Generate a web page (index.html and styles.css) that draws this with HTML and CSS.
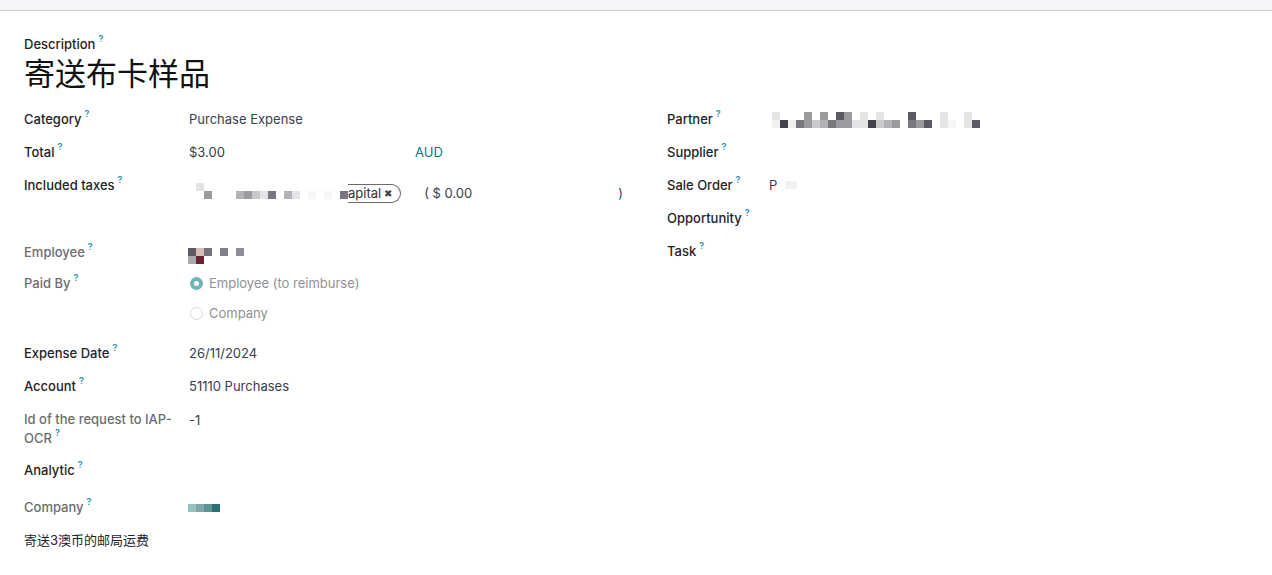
FILE: index.html
```html
<!DOCTYPE html>
<html lang="en">
<head>
<meta charset="utf-8">
<title>Expense</title>
<link rel="stylesheet" href="styles.css">
</head>
<body>
<div class="topbar"></div>
<main class="sheet">
  <div class="desc-label">Description<sup class="help">?</sup></div>
  <h1 class="title">寄送布卡样品</h1>

  <div class="groups">
    <section class="group group-left">
      <div class="row">
        <div class="label">Category<sup class="help">?</sup></div>
        <div class="value">Purchase Expense</div>
      </div>
      <div class="row">
        <div class="label">Total<sup class="help">?</sup></div>
        <div class="value total">
          <span class="amount">$3.00</span>
          <span class="currency">AUD</span>
        </div>
      </div>
      <div class="row row-taxes">
        <div class="label">Included taxes<sup class="help">?</sup></div>
        <div class="value taxes">
          <div class="pix pix-tax">
            <i class="p-l1"></i><i></i><i></i><i></i><i></i><i></i><i></i><i></i><i></i><i></i><i></i><i></i><i></i><i></i><i></i><i></i><i></i><i></i><i></i>
            <i></i><i class="p-m1"></i><i></i><i></i><i></i><i class="p-m3"></i><i class="p-m1"></i><i class="p-l0"></i><i class="p-l1"></i><i class="p-m2"></i><i></i><i class="p-m3"></i><i class="p-l1"></i><i></i><i class="p-l3"></i><i></i><i class="p-l3"></i><i></i><i class="p-m2"></i>
          </div>
          <span class="pill">apital <span class="pill-x">✖</span></span>
          <span class="tax-amount">( $ 0.00</span>
          <span>)</span>
        </div>
      </div>
      <div class="row row-employee">
        <div class="label muted">Employee<sup class="help">?</sup></div>
        <div class="value emp">
          <div class="pix pix-emp">
            <i class="e1"></i><i class="e2"></i><i class="e3"></i><i></i><i class="e4"></i><i></i><i class="e5"></i>
            <i class="e6"></i><i class="e7"></i><i></i><i></i><i></i><i></i><i></i>
          </div>
        </div>
      </div>
      <div class="row row-paid">
        <div class="label muted">Paid By<sup class="help">?</sup></div>
        <div class="value radios">
          <label class="radio"><span class="dot on"></span>Employee (to reimburse)</label>
          <label class="radio"><span class="dot"></span>Company</label>
        </div>
      </div>
      <div class="row">
        <div class="label">Expense Date<sup class="help">?</sup></div>
        <div class="value">26/11/2024</div>
      </div>
      <div class="row">
        <div class="label">Account<sup class="help">?</sup></div>
        <div class="value">51110 Purchases</div>
      </div>
      <div class="row row-iap">
        <div class="label muted">Id of the request to IAP-OCR<sup class="help">?</sup></div>
        <div class="value">-1</div>
      </div>
      <div class="row row-analytic">
        <div class="label">Analytic<sup class="help">?</sup></div>
        <div class="value"></div>
      </div>
      <div class="row">
        <div class="label muted">Company<sup class="help">?</sup></div>
        <div class="value comp">
          <div class="pix pix-comp"><i class="c1"></i><i class="c2"></i><i class="c3"></i><i class="c4"></i></div>
        </div>
      </div>
    </section>

    <section class="group group-right">
      <div class="row">
        <div class="label">Partner<sup class="help">?</sup></div>
        <div class="value partner">
          <div class="pix pix-partner">
            <i class="p-l1"></i><i></i><i></i><i></i><i class="p-m1"></i><i></i><i class="p-m1"></i><i></i><i class="p-d1"></i><i class="p-m1"></i><i></i><i class="p-l1"></i><i></i><i class="p-l1"></i><i></i><i></i><i></i><i class="p-d1"></i><i></i><i></i><i></i><i class="p-l1"></i><i></i><i></i><i class="p-l1"></i><i></i>
            <i class="p-l2"></i><i class="p-d2"></i><i class="p-l2"></i><i class="p-m2"></i><i class="p-m1"></i><i class="p-l0"></i><i class="p-m3"></i><i class="p-m2"></i><i class="p-m1"></i><i class="p-m1"></i><i class="p-l1"></i><i class="p-l1"></i><i class="p-d2"></i><i class="p-l0"></i><i class="p-m3"></i><i class="p-m1"></i><i></i><i class="p-m2"></i><i class="p-m1"></i><i class="p-d1"></i><i></i><i class="p-l1"></i><i class="p-l3"></i><i></i><i class="p-l1"></i><i class="p-d1"></i>
          </div>
        </div>
      </div>
      <div class="row">
        <div class="label">Supplier<sup class="help">?</sup></div>
        <div class="value"></div>
      </div>
      <div class="row">
        <div class="label">Sale Order<sup class="help">?</sup></div>
        <div class="value so">P<span class="so-blur"><i></i><i></i></span></div>
      </div>
      <div class="row">
        <div class="label">Opportunity<sup class="help">?</sup></div>
        <div class="value"></div>
      </div>
      <div class="row">
        <div class="label">Task<sup class="help">?</sup></div>
        <div class="value"></div>
      </div>
    </section>
  </div>

  <p class="note">寄送3澳币的邮局运费</p>
</main>
</body>
</html>
```

FILE: styles.css
```css
* { box-sizing: border-box; }

html, body {
  margin: 0;
  padding: 0;
  background: #ffffff;
}

body {
  font-family: Inter, "Noto Sans CJK SC", sans-serif;
  font-size: 13px;
  line-height: 20px;
  color: #374151;
}

.topbar {
  height: 11px;
  background: #f4f5f9;
  border-bottom: 1px solid #cdced5;
}

.sheet {
  padding: 23px 24px 0 24px;
}

.desc-label {
  font-weight: 500;
  color: #1f2328;
}

.title {
  margin: 0;
  font-family: "Noto Sans CJK SC", sans-serif;
  font-size: 31px;
  line-height: 36px;
  font-weight: 400;
  color: #111111;
}

.help {
  font-size: 9px;
  line-height: 0;
  font-weight: 600;
  color: #2a90b5;
  margin-left: 3px;
  vertical-align: 7px;
}

.groups {
  display: grid;
  grid-template-columns: 619px 1fr;
  column-gap: 24px;
  margin-top: 13px;
}

.row {
  display: grid;
  grid-template-columns: 165px 1fr;
  min-height: 33px;
  align-items: start;
}

.group-right .row {
  grid-template-columns: 105px 1fr;
}

.label {
  padding: 6px 12px 7px 0;
  font-weight: 500;
  color: #1f2328;
}

.label.muted {
  color: #6b6d70;
}

.value {
  padding: 6px 0 7px 0;
  color: #374151;
}

.total {
  display: flex;
}

.amount {
  width: 226px;
}

.currency {
  color: #017e84;
}

/* redacted pixel blocks */
.pix {
  display: grid;
  grid-auto-rows: 8px;
}

.pix i {
  display: block;
  width: 8px;
  height: 8px;
}

.p-l0 { background: #c9c9cc; }
.p-l1 { background: #e4e4e6; }
.p-l2 { background: #efeff0; }
.p-l3 { background: #f6f6f7; }
.p-m1 { background: #9a9a9f; }
.p-m2 { background: #78787e; }
.p-m3 { background: #b2b2b6; }
.p-d1 { background: #5a5b62; }
.p-d2 { background: #40434b; }

.row-taxes {
  min-height: 67px;
}

.taxes {
  display: flex;
  align-items: flex-start;
  padding-top: 14px;
}

.pix-tax {
  grid-template-columns: repeat(19, 8px);
  margin-left: 7px;
}

.pill {
  display: inline-flex;
  align-items: center;
  height: 19px;
  margin-top: 1px;
  padding: 0 8px 0 0;
  border: 1px solid #6b6b6b;
  border-left: none;
  border-radius: 0 10px 10px 0;
  font-size: 13px;
  line-height: 17px;
  color: #333333;
}

.pill-x {
  font-size: 10px;
  margin-left: 3px;
  color: #444444;
}

.tax-amount {
  margin-left: 23px;
  width: 194px;
}

.row-employee {
  min-height: 31px;
}

.row-employee .label {
  padding-bottom: 5px;
}

.emp {
  padding-top: 12px;
  padding-bottom: 0;
}

.pix-emp {
  grid-template-columns: repeat(7, 8px);
  margin-left: -1px;
}

.e1 { background: #5f5a62; }
.e2 { background: #d6bdb7; }
.e3 { background: #75717a; }
.e4 { background: #7c7e88; }
.e5 { background: #8e8d93; }
.e6 { background: #a9a8ad; }
.e7 { background: #6b2233; }

.row-paid {
  min-height: 70px;
}

.radios {
  display: flex;
  flex-direction: column;
  row-gap: 10px;
}

.radio {
  display: flex;
  align-items: center;
  color: #8f9194;
}

.dot {
  width: 13px;
  height: 13px;
  border-radius: 50%;
  border: 1px solid #d8d8da;
  margin: 0 6px 0 1px;
  background: #ffffff;
}

.dot.on {
  border: 4px solid #71b3b7;
}

.row-iap .label {
  line-height: 19px;
  padding-top: 7px;
  padding-bottom: 6px;
}

.row-iap .value {
  padding-top: 7px;
}

.row-analytic {
  min-height: 37px;
}

.comp {
  padding-top: 13px;
}

.pix-comp {
  grid-template-columns: repeat(4, 8px);
  margin-left: -1px;
}

.c1 { background: #98c0c0; }
.c2 { background: #80aaa9; }
.c3 { background: #5f9494; }
.c4 { background: #2b7070; }

.partner {
  padding-top: 9px;
}

.pix-partner {
  grid-template-columns: repeat(26, 8px);
}

.so {
  display: flex;
  align-items: center;
  margin-left: -3px;
}

.so-blur {
  display: flex;
  margin-left: 8px;
}

.so-blur i {
  display: block;
  width: 6px;
  height: 8px;
  background: #f1f1f2;
}

.note {
  margin: 6px 0 0 0;
  color: #1f2328;
}
```
